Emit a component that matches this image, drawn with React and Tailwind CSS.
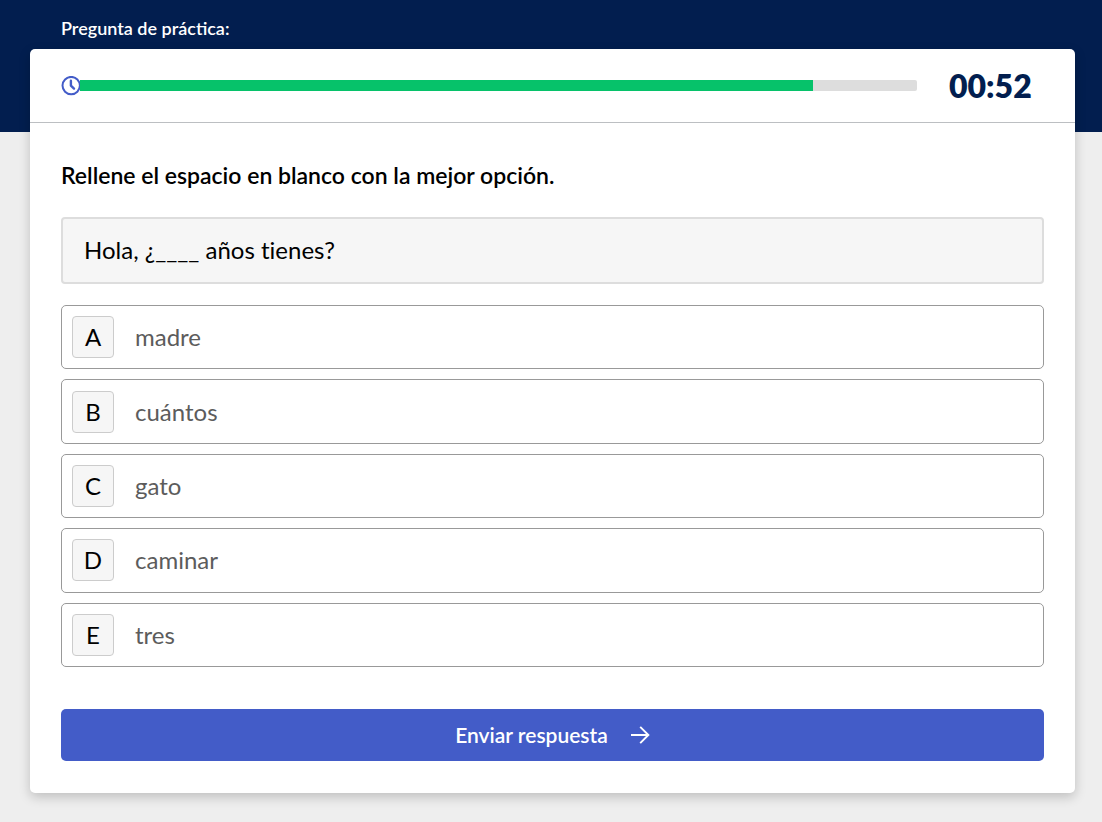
import { useState } from "react";

const OPTIONS = [
  { letter: "A", text: "madre" },
  { letter: "B", text: "cuántos" },
  { letter: "C", text: "gato" },
  { letter: "D", text: "caminar" },
  { letter: "E", text: "tres" },
];

function ClockIcon() {
  return (
    <svg width="20" height="20" viewBox="0 0 20 20" fill="none" stroke="#435cc8" aria-hidden="true" className="shrink-0">
      <circle cx="10.2" cy="9.6" r="8.7" fill="#fff" strokeWidth="2" />
      <path d="M9.9 4.8V9.6L13 12.6" strokeWidth="2.4" strokeLinecap="round" strokeLinejoin="round" />
    </svg>
  );
}

function ArrowIcon() {
  return (
    <svg width="20" height="20" viewBox="0 0 20 20" fill="none" stroke="currentColor" strokeWidth="1.9" aria-hidden="true" className="shrink-0">
      <path d="M1 10H18M10.2 1.8L18.4 10L10.2 18.2" />
    </svg>
  );
}

function Timer({ percent, label }) {
  return (
    <div className="flex h-[74px] items-center border-b border-[#bcbfc2] px-[31px]">
      <ClockIcon />
      <div
        role="progressbar"
        aria-label="Tiempo restante"
        aria-valuenow={percent}
        aria-valuemin={0}
        aria-valuemax={100}
        className="-ml-px h-[11px] flex-1 overflow-hidden rounded-r-[2px] bg-[#dddddd]"
      >
        <div className="h-full bg-[#06c26a]" style={{ width: `${percent}%` }} />
      </div>
      <time className="ml-8 w-[95px] text-[32px] leading-10 font-extrabold text-[#021e4f]">{label}</time>
    </div>
  );
}

function Option({ letter, text, checked, onChange }) {
  return (
    <label className="relative flex cursor-pointer items-center rounded-[5px] border border-[#999999] px-[10px] has-checked:border-[#435cc8] has-checked:bg-[#eef1fc]">
      <input type="radio" name="respuesta" value={letter} checked={checked} onChange={onChange} className="sr-only" />
      <span className="flex size-[42px] items-center justify-center rounded-[4px] border border-[#cccccc] bg-[#f6f6f6] text-2xl text-black">
        {letter}
      </span>
      <span className="ml-[21px] text-2xl text-[#5c5c5c]">{text}</span>
    </label>
  );
}

export default function App() {
  const [answer, setAnswer] = useState(null);

  return (
    <div className="min-h-screen bg-[#eeeeee] pb-7 font-['Lato',sans-serif] text-black">
      <header className="h-[132px] bg-[#021e4f] px-[61px] pt-4">
        <h1 className="text-lg leading-6 font-semibold text-white">Pregunta de práctica:</h1>
      </header>
      <main className="-mt-[83px] mr-[27px] ml-[30px] rounded-[5px] bg-white shadow-[0_4px_12px_rgba(0,0,0,0.2)]">
        <Timer percent={87.6} label="00:52" />
        <form className="flex flex-col px-[31px] pt-[34px] pb-8" onSubmit={(e) => e.preventDefault()}>
          <h2 id="consigna" className="text-[23px] leading-9 font-semibold">
            Rellene el espacio en blanco con la mejor opción.
          </h2>
          <p className="mt-6 rounded-[4px] border-2 border-[#dddddd] bg-[#f6f6f6] px-[21px] pt-[15px] pb-4 text-2xl leading-8 [font-variant-ligatures:none]">
            Hola, ¿____ años tienes?
          </p>
          <div role="radiogroup" aria-labelledby="consigna" className="mt-[21px] grid min-h-[362px] auto-rows-fr gap-[10px]">
            {OPTIONS.map((option) => (
              <Option
                key={option.letter}
                {...option}
                checked={answer === option.letter}
                onChange={() => setAnswer(option.letter)}
              />
            ))}
          </div>
          <button
            type="submit"
            className="mt-[42px] flex h-[52px] cursor-pointer items-center justify-center gap-[22px] rounded-[5px] bg-[#435cc8] text-[21px] font-semibold text-white"
          >
            Enviar respuesta
            <ArrowIcon />
          </button>
        </form>
      </main>
    </div>
  );
}
